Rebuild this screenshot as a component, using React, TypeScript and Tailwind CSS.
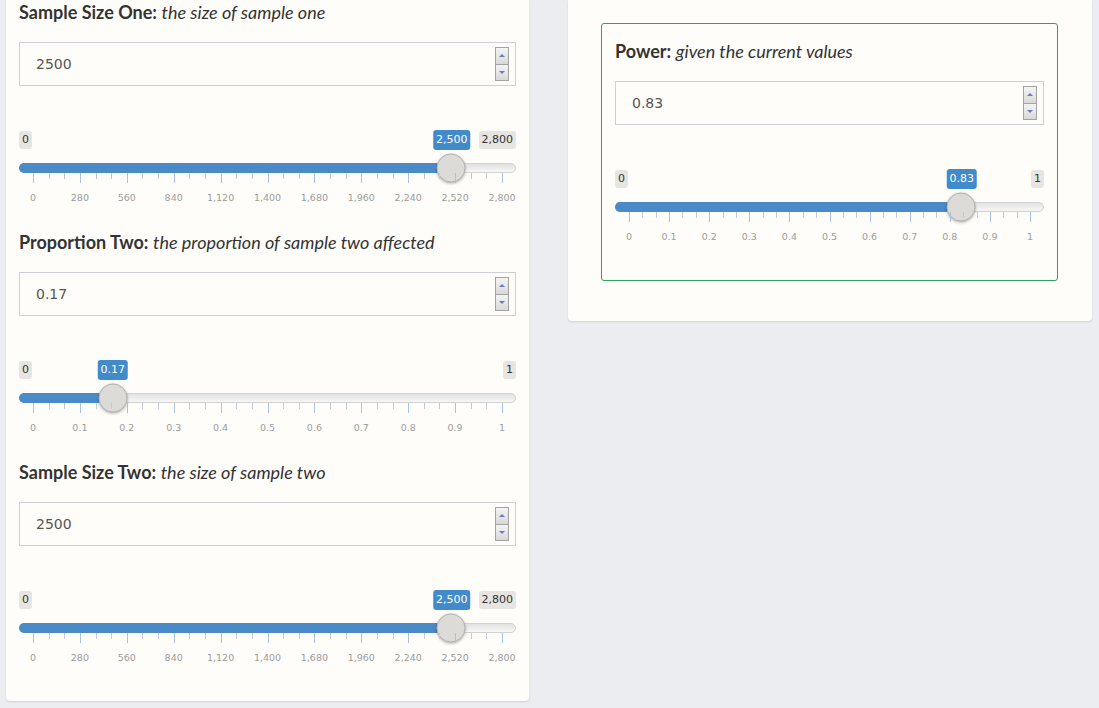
import React from "react";

type SliderProps = {
  min: number;
  max: number;
  value: number;
  fmt: (n: number) => string;
};

const num = (n: number) => n.toLocaleString("en-US");
const dec = (n: number) => String(Math.round(n * 100) / 100);

function Spinner() {
  return (
    <div className="flex flex-col w-[14px] h-[34px]">
      <div className="flex-1 flex items-center justify-center border border-[#a3a3a3] bg-gradient-to-b from-[#f4f4f4] to-[#d9d9d9]">
        <div className="w-0 h-0 border-x-[3px] border-x-transparent border-b-[3px] border-b-[#6b7cc0]" />
      </div>
      <div className="flex-1 flex items-center justify-center border border-t-0 border-[#a3a3a3] bg-gradient-to-b from-[#f4f4f4] to-[#d9d9d9]">
        <div className="w-0 h-0 border-x-[3px] border-x-transparent border-t-[3px] border-t-[#6b7cc0]" />
      </div>
    </div>
  );
}

function NumberBox({ value }: { value: string }) {
  return (
    <div className="h-[44px] border border-[#cfd0d6] bg-[#fefdf9] flex items-center justify-between pl-[16px] pr-[6px]">
      <span className="text-[14px] text-[#555] font-['DejaVu_Sans',sans-serif]">{value}</span>
      <Spinner />
    </div>
  );
}

function Slider({ min, max, value, fmt }: SliderProps) {
  const p = (value - min) / (max - min);
  const pos = `calc(14px + ${p} * (100% - 28px))`;
  const major = Array.from({ length: 11 }, (_, i) => i / 10);
  const minor: number[] = [];
  for (let i = 0; i < 10; i++) {
    minor.push((i + 1 / 3) / 10, (i + 2 / 3) / 10);
  }
  return (
    <div className="relative h-[73px] font-['DejaVu_Sans',sans-serif]">
      <div className="flex justify-between h-[18px]">
        <span className="h-[18px] px-[3px] rounded-[3px] bg-[#e6e5e1] text-[#333] text-[11px] leading-[18px]">
          {fmt(min)}
        </span>
        <span className="h-[18px] px-[3px] rounded-[3px] bg-[#e6e5e1] text-[#333] text-[11px] leading-[18px]">
          {fmt(max)}
        </span>
      </div>
      <span
        className="absolute top-[-1px] -translate-x-1/2 h-[20px] px-[3px] rounded-[3px] bg-[#428bca] text-white text-[11px] leading-[20px]"
        style={{ left: pos }}
      >
        {fmt(value)}
      </span>
      <div className="relative mt-[14px] h-[10px] rounded-full border border-[#d2d2d2] bg-gradient-to-b from-[#e2e2e2] to-[#f7f7f6]">
        <div
          className="absolute -left-px -top-px -bottom-px rounded-l-full bg-[#4b8ac9]"
          style={{ width: pos }}
        />
        <div
          className="absolute top-1/2 w-[29px] h-[29px] -translate-x-1/2 -translate-y-1/2 rounded-full border border-[#b3b3b3] bg-[#dcdbd8] shadow-[0_1px_3px_rgba(0,0,0,0.3)]"
          style={{ left: pos }}
        />
      </div>
      <div className="relative mx-[14px] h-[10px]">
        {major.map((t) => (
          <div key={"M" + t} className="absolute top-0 w-px h-[10px] bg-[#a6c1e3]" style={{ left: `${t * 100}%` }} />
        ))}
        {minor.map((t) => (
          <div key={"m" + t} className="absolute top-0 w-px h-[6px] bg-[#c4cad3]" style={{ left: `${t * 100}%` }} />
        ))}
      </div>
      <div className="relative mx-[14px] mt-[8px] h-[13px]">
        {major.map((t) => (
          <span
            key={"L" + t}
            className="absolute top-0 -translate-x-1/2 text-[9.5px] leading-[13px] text-[#9c9c9c] whitespace-nowrap"
            style={{ left: `${t * 100}%` }}
          >
            {fmt(min + t * (max - min))}
          </span>
        ))}
      </div>
    </div>
  );
}

function Heading({ bold, rest }: { bold: string; rest: string }) {
  return (
    <div className="h-[20px] leading-[20px] text-[18px] text-[#333] font-['Lato',sans-serif] whitespace-nowrap">
      <span className="font-bold">{bold}</span> <em>{rest}</em>
    </div>
  );
}

function Group({
  bold,
  rest,
  input,
  min,
  max,
  value,
  fmt,
}: {
  bold: string;
  rest: string;
  input: string;
  min: number;
  max: number;
  value: number;
  fmt: (n: number) => string;
}) {
  return (
    <div className="flex flex-col">
      <Heading bold={bold} rest={rest} />
      <div className="mt-[20px]">
        <NumberBox value={input} />
      </div>
      <div className="mt-[45px]">
        <Slider min={min} max={max} value={value} fmt={fmt} />
      </div>
    </div>
  );
}

export default function App() {
  return (
    <div className="min-h-[708px] bg-[#ecedf0] flex items-start gap-[39px] pl-[6px] pr-[7px]">
      <div className="w-[523px] bg-[#fefdf9] rounded-b-[4px] shadow-[0_1px_2px_rgba(0,0,0,0.12)] px-[13px] pt-[2px] pb-[37px] flex flex-col gap-[28px]">
        <Group bold="Sample Size One:" rest="the size of sample one" input="2500" min={0} max={2800} value={2500} fmt={num} />
        <Group bold="Proportion Two:" rest="the proportion of sample two affected" input="0.17" min={0} max={1} value={0.17} fmt={dec} />
        <Group bold="Sample Size Two:" rest="the size of sample two" input="2500" min={0} max={2800} value={2500} fmt={num} />
      </div>
      <div className="flex-1 bg-[#fefdf9] rounded-b-[4px] shadow-[0_1px_2px_rgba(0,0,0,0.12)] pt-[23px] pb-[40px] pl-[33px] pr-[34px]">
        <div className="border border-[#2ea55e] rounded-[3px] px-[13px] pt-[17px] pb-[37px]">
          <Group bold="Power:" rest="given the current values" input="0.83" min={0} max={1} value={0.83} fmt={dec} />
        </div>
      </div>
    </div>
  );
}
